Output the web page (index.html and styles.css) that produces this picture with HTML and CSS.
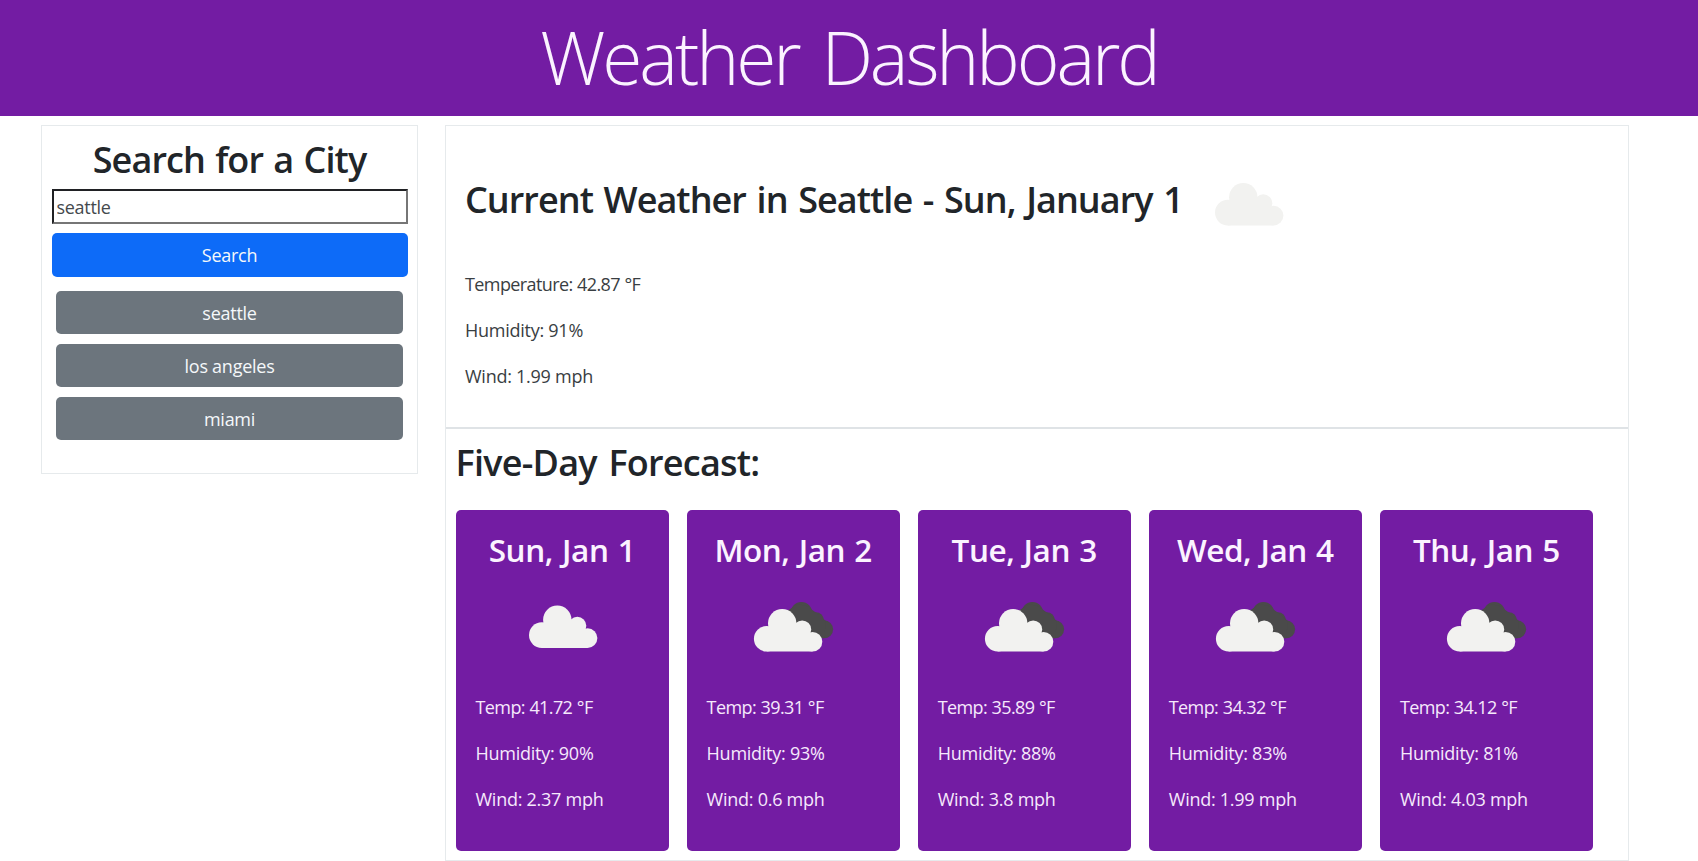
FILE: index.html
```html
<!DOCTYPE html>
<html lang="en">
<head>
<meta charset="utf-8">
<title>Weather Dashboard</title>
<link rel="stylesheet" href="styles.css">
</head>
<body>
<svg width="0" height="0" class="defs" aria-hidden="true">
  <defs>
    <g id="cloud">
      <circle cx="12.8" cy="29.6" r="12.8"/>
      <circle cx="28.3" cy="14.2" r="14.2"/>
      <circle cx="48.3" cy="20.3" r="9"/>
      <circle cx="58.6" cy="32.6" r="9.8"/>
      <path d="M12.8 20H50L58.6 27V42.4H12.8Z"/>
    </g>
    <g id="clouds">
      <g fill="#4a4a4a">
        <circle cx="47.5" cy="3.5" r="10.7"/>
        <circle cx="62" cy="11" r="7.9"/>
        <circle cx="70.2" cy="20.2" r="9"/>
        <path d="M30 4L44 -5L53 -3L64 5L72 12L70.2 29.2H56L40 20Z"/>
      </g>
      <use href="#cloud" fill="#f2f2f0"/>
    </g>
  </defs>
</svg>
<header class="site-header"><h1 class="site-title">Weather Dashboard</h1></header>
<main class="layout">
  <aside class="search-panel">
    <h2 class="search-title">Search for a City</h2>
    <input class="search-input" type="text" value="seattle">
    <button class="btn btn-primary">Search</button>
    <div class="history">
      <button class="btn btn-secondary">seattle</button>
      <button class="btn btn-secondary">los angeles</button>
      <button class="btn btn-secondary">miami</button>
    </div>
  </aside>
  <div class="content">
    <section class="current">
      <div class="current-head">
        <h2 class="current-title">Current Weather in Seattle - Sun, January 1</h2>
        <svg class="icon" viewBox="0 0 115 115"><use href="#cloud" x="24" y="41" fill="#f2f2f0"/></svg>
      </div>
      <p class="temp">Temperature: 42.87 °F</p>
      <p>Humidity: 91%</p>
      <p>Wind: 1.99 mph</p>
    </section>
    <section class="forecast">
      <h2 class="forecast-title">Five-Day Forecast:</h2>
      <div class="cards">
        <article class="card">
          <h3 class="card-title">Sun, Jan 1</h3>
          <svg class="icon" viewBox="0 0 115 115"><use href="#cloud" x="24" y="35.5" fill="#f2f2f0"/></svg>
          <p class="temp">Temp: 41.72 °F</p><p>Humidity: 90%</p><p>Wind: 2.37 mph</p>
        </article>
        <article class="card">
          <h3 class="card-title">Mon, Jan 2</h3>
          <svg class="icon" viewBox="0 0 115 115"><use href="#clouds" x="17.9" y="39.1"/></svg>
          <p class="temp">Temp: 39.31 °F</p><p>Humidity: 93%</p><p>Wind: 0.6 mph</p>
        </article>
        <article class="card">
          <h3 class="card-title">Tue, Jan 3</h3>
          <svg class="icon" viewBox="0 0 115 115"><use href="#clouds" x="17.9" y="39.1"/></svg>
          <p class="temp">Temp: 35.89 °F</p><p>Humidity: 88%</p><p>Wind: 3.8 mph</p>
        </article>
        <article class="card">
          <h3 class="card-title">Wed, Jan 4</h3>
          <svg class="icon" viewBox="0 0 115 115"><use href="#clouds" x="17.9" y="39.1"/></svg>
          <p class="temp">Temp: 34.32 °F</p><p>Humidity: 83%</p><p>Wind: 1.99 mph</p>
        </article>
        <article class="card">
          <h3 class="card-title">Thu, Jan 5</h3>
          <svg class="icon" viewBox="0 0 115 115"><use href="#clouds" x="17.9" y="39.1"/></svg>
          <p class="temp">Temp: 34.12 °F</p><p>Humidity: 81%</p><p>Wind: 4.03 mph</p>
        </article>
      </div>
    </section>
  </div>
</main>
</body>
</html>
```
FILE: styles.css
```css
*, *::before, *::after { box-sizing: border-box; }
html, body { height: 100%; }
body {
  margin: 0;
  overflow: hidden;
  background: #fff;
  color: #212529;
  font: 400 18px/27.6px "Open Sans", "Noto Sans", sans-serif;
  letter-spacing: -0.26px;
}
h1, h2, h3, p { margin: 0; }
h2 { font-size: 36px; line-height: 44px; font-weight: 600; }
.defs { display: block; height: 0; }

.site-header { height: 116px; padding-top: 13px; background: #731ca3; text-align: center; }
.site-title {
  color: #fbf3ff;
  font-size: 73px;
  line-height: 88px;
  font-weight: 300;
  letter-spacing: -3.1px;
  word-spacing: 7px;
}

.layout { display: flex; align-items: flex-start; gap: 27px; padding: 9px 0 0 41px; }

.search-panel {
  width: 377px;
  height: 349px;
  padding: 12px 9.5px 0;
  border: 1px solid #e6eaec;
  display: flex;
  flex-direction: column;
}
.search-title { text-align: center; letter-spacing: -0.9px; word-spacing: 1.8px; }
.search-input {
  width: 100%;
  height: 35px;
  margin: 7px 0 9.4px;
  padding: 1px 3px;
  border: 2px solid;
  border-color: #202124 #767676 #767676 #202124;
  border-radius: 0;
  background: #fff;
  color: #44494d;
  font: inherit;
  letter-spacing: -0.3px;
}
.btn {
  width: 100%;
  height: 43.8px;
  padding: 2px 0 0;
  border: 0;
  border-radius: 5px;
  color: #f5f8fa;
  font: inherit;
  letter-spacing: inherit;
}
.btn-primary { background: #0d6bf8; }
.btn-secondary { background: #6c757d; }
.history { display: flex; flex-direction: column; gap: 9.2px; padding: 13.5px 4.6px 0; }

.content { width: 1184px; border: 1px solid #e6eaec; }
.current { height: 303px; padding: 15.5px 19px 0; border-bottom: 2px solid #dfe3e6; }
.current-head { display: flex; align-items: center; gap: 6.5px; margin-bottom: 14.9px; }
.current-title {
  width: 719.5px;
  padding-top: 2px;
  white-space: nowrap;
  letter-spacing: -0.95px;
  word-spacing: 2.2px;
}
.current p { color: #393e42; }
.icon { display: block; width: 115px; height: 115px; flex: none; overflow: visible; }
p + p { margin-top: 18.4px; }
.temp { letter-spacing: -0.6px; word-spacing: 0.4px; }

.forecast { padding: 12px 9.5px 9px; }
.forecast-title { letter-spacing: -0.75px; word-spacing: 3px; }
.cards { display: grid; grid-template-columns: repeat(5, 213px); gap: 18.1px; margin-top: 25px; }
.card {
  height: 341px;
  padding: 21px 20px;
  border-radius: 5px;
  background: #731ca3;
  color: #f6e9fc;
}
.card-title {
  color: #fbf3ff;
  font-size: 31.5px;
  line-height: 38.6px;
  font-weight: 600;
  letter-spacing: -0.45px;
  word-spacing: 1.5px;
  text-align: center;
  white-space: nowrap;
}
.card .icon { margin: 0 auto 9.4px; }
```
